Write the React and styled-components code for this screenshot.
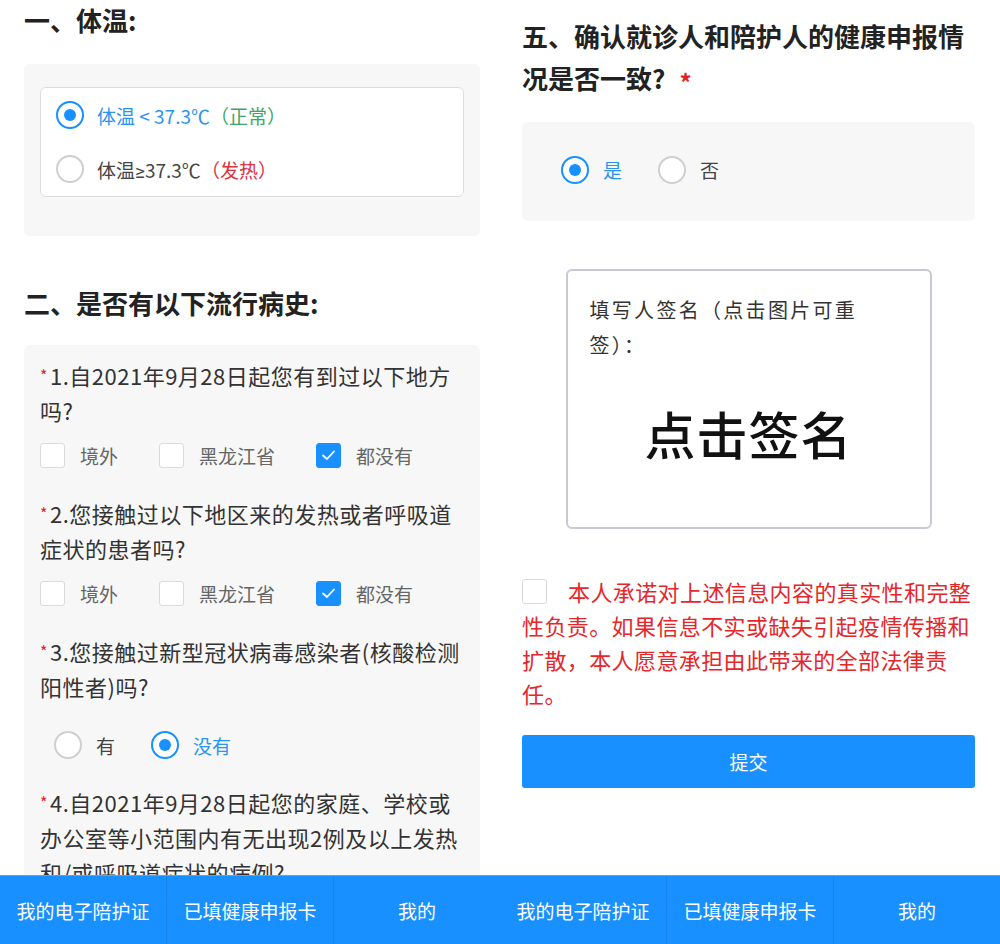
import React from "react";
import styled, { createGlobalStyle } from "styled-components";

const BLUE = "#1890ff";

const GlobalStyle = createGlobalStyle`
  html, body {
    margin: 0;
    padding: 0;
    background: #fff;
  }
  body {
    font-family: "Noto Sans CJK SC", "Noto Sans", sans-serif;
    color: #333;
  }
  * {
    box-sizing: border-box;
  }
`;

const Screen = styled.div`
  display: flex;
  width: 1000px;
  height: 944px;
  overflow: hidden;
`;

const Phone = styled.div`
  width: 500px;
  display: flex;
  flex-direction: column;
`;

const Content = styled.div`
  flex: 1;
  overflow: hidden;
  padding: ${(p) => p.$pad};
`;

const Heading = styled.h2`
  margin: ${(p) => p.$margin || 0};
  font-size: 26px;
  font-weight: 700;
  line-height: ${(p) => p.$lh || 40}px;
  color: #222;
`;

const Star = styled.span`
  display: inline-block;
  margin: 0 ${(p) => p.$gap ?? 2}px 0 ${(p) => p.$before || 0}px;
  color: #e52222;
  font-size: ${(p) => p.$size || 16}px;
  line-height: 1;
  vertical-align: ${(p) => p.$lift ?? 3}px;
`;

const Card = styled.div`
  background: #f7f7f7;
  border-radius: 6px;
  padding: ${(p) => p.$pad};
`;

const TempBox = styled.div`
  background: #fff;
  border: 1.5px solid #dcdcdc;
  border-radius: 6px;
`;

const OptionRow = styled.div`
  height: 54px;
  display: flex;
  align-items: center;
  gap: 13px;
  padding-left: 15px;
`;

const RadioCircle = styled.span`
  width: 28px;
  height: 28px;
  flex-shrink: 0;
  border-radius: 50%;
  border: 2.5px solid ${(p) => (p.$on ? BLUE : "#cfcfcf")};
  background: #fff;
  display: inline-flex;
  align-items: center;
  justify-content: center;
  &::after {
    content: "";
    display: ${(p) => (p.$on ? "block" : "none")};
    width: 12px;
    height: 12px;
    border-radius: 50%;
    background: ${BLUE};
  }
`;

const OptionText = styled.span`
  font-size: 19px;
  color: ${(p) => (p.$on ? "#2a93f0" : "#444")};
`;

const Tag = styled.span`
  color: ${(p) => p.$color};
`;

const Sign = styled.span`
  font-family: Roboto, "Noto Sans", sans-serif;
`;

const Question = styled.p`
  margin: 0;
  font-size: 22px;
  line-height: 35px;
  letter-spacing: 0.5px;
  color: #333;
`;

const CheckRow = styled.div`
  height: 34px;
  margin: 10px 0 24px;
  display: flex;
  align-items: center;
  gap: 41px;
`;

const CheckItem = styled.label`
  display: flex;
  align-items: center;
  gap: 15px;
  font-size: 19px;
  color: #666;
`;

const Box = styled.span`
  width: 25px;
  height: 25px;
  flex-shrink: 0;
  border-radius: 3px;
  border: 1.5px solid ${(p) => (p.$on ? BLUE : "#dadada")};
  background: ${(p) => (p.$on ? BLUE : "#fff")};
  display: inline-flex;
  align-items: center;
  justify-content: center;
`;

const RadioRow = styled.div`
  height: 40px;
  margin: ${(p) => p.$margin || 0};
  padding-left: ${(p) => p.$indent || 0}px;
  display: flex;
  align-items: center;
  gap: 36px;
`;

const RadioItem = styled.label`
  display: flex;
  align-items: center;
  gap: 14px;
`;

const ConfirmCard = styled(Card)`
  height: 99px;
  display: flex;
  align-items: center;
`;

const SignBox = styled.div`
  width: 366px;
  height: 260px;
  margin: 48px auto 0;
  padding: 21px 22px 0;
  background: #fff;
  border: 2px solid #c8c8d6;
  border-radius: 6px;
`;

const SignHint = styled.div`
  width: 284px;
  font-size: 20px;
  letter-spacing: 2.3px;
  line-height: 35px;
  color: #333;
`;

const SignBig = styled.div`
  margin-top: 36px;
  line-height: 70px;
  text-align: center;
  font-size: 51px;
  font-weight: 500;
  letter-spacing: 1px;
  color: #111;
`;

const Promise = styled.p`
  margin: 45px 0 0;
  font-size: 22px;
  line-height: 34px;
  letter-spacing: 0.4px;
  color: #e5262b;
`;

const InlineBox = styled(Box)`
  display: inline-block;
  vertical-align: -3px;
  margin-right: 21px;
`;

const SubmitButton = styled.button`
  display: block;
  width: 100%;
  height: 53px;
  margin-top: 25px;
  border: none;
  border-radius: 3px;
  background: ${BLUE};
  color: #fff;
  font-family: inherit;
  font-size: 19px;
`;

const TabBar = styled.nav`
  height: 69px;
  flex-shrink: 0;
  display: flex;
  background: ${BLUE};
  border-top: 1px solid #4aa8ff;
`;

const Tab = styled.div`
  flex: 1;
  display: flex;
  align-items: center;
  justify-content: center;
  font-size: 19px;
  color: #fff;
  & + & {
    border-left: 1px solid rgba(0, 0, 0, 0.07);
  }
`;

const Check = () => (
  <svg width="17" height="17" viewBox="0 0 17 17">
    <polyline
      points="3,8.5 7,12 14,4.5"
      fill="none"
      stroke="#fff"
      strokeWidth="1.8"
      strokeLinecap="round"
      strokeLinejoin="round"
    />
  </svg>
);

const Radio = ({ on, label }) => (
  <RadioItem>
    <RadioCircle $on={on} />
    <OptionText $on={on}>{label}</OptionText>
  </RadioItem>
);

const Checks = ({ picked }) => (
  <CheckRow>
    {["境外", "黑龙江省", "都没有"].map((name) => (
      <CheckItem key={name}>
        <Box $on={name === picked}>{name === picked && <Check />}</Box>
        {name}
      </CheckItem>
    ))}
  </CheckRow>
);

const Tabs = () => (
  <TabBar>
    <Tab>我的电子陪护证</Tab>
    <Tab>已填健康申报卡</Tab>
    <Tab>我的</Tab>
  </TabBar>
);

const LeftScreen = () => (
  <Phone>
    <Content $pad="0 20px 0 24px">
      <Heading $margin="0 0 24px">一、体温:</Heading>
      <Card $pad="23px 16px 39px">
        <TempBox>
          <OptionRow>
            <RadioCircle $on />
            <OptionText $on>
              体温 &lt; 37.3℃<Tag $color="#3aa66c">（正常）</Tag>
            </OptionText>
          </OptionRow>
          <OptionRow>
            <RadioCircle />
            <OptionText>
              体温<Sign>≥</Sign>37.3℃<Tag $color="#e0303a">（发热）</Tag>
            </OptionText>
          </OptionRow>
        </TempBox>
      </Card>

      <Heading $margin="47px 0 22px">二、是否有以下流行病史:</Heading>
      <Card $pad="13px 14px 0 16px">
        <Question>
          <Star>*</Star>1.自2021年9月28日起您有到过以下地方吗?
        </Question>
        <Checks picked="都没有" />
        <Question>
          <Star>*</Star>2.您接触过以下地区来的发热或者呼吸道症状的患者吗?
        </Question>
        <Checks picked="都没有" />
        <Question>
          <Star>*</Star>3.您接触过新型冠状病毒感染者(核酸检测阳性者)吗?
        </Question>
        <RadioRow $indent={14} $margin="21px 0 20px">
          <Radio label="有" />
          <Radio on label="没有" />
        </RadioRow>
        <Question>
          <Star>*</Star>4.自2021年9月28日起您的家庭、学校或办公室等小范围内有无出现2例及以上发热和/或呼吸道症状的病例?
        </Question>
      </Card>
    </Content>
    <Tabs />
  </Phone>
);

const RightScreen = () => (
  <Phone>
    <Content $pad="15px 25px 0 22px">
      <Heading $lh={42} $margin="0 0 23px">
        五、确认就诊人和陪护人的健康申报情况是否一致?
        <Star $size={24} $lift={-3} $before={14} $gap={0}>
          *
        </Star>
      </Heading>
      <ConfirmCard $pad="0 0 0 39px">
        <RadioRow $margin="0 0 4px">
          <Radio on label="是" />
          <Radio label="否" />
        </RadioRow>
      </ConfirmCard>

      <SignBox>
        <SignHint>填写人签名（点击图片可重签）：</SignHint>
        <SignBig>点击签名</SignBig>
      </SignBox>

      <Promise>
        <InlineBox />
        本人承诺对上述信息内容的真实性和完整性负责。如果信息不实或缺失引起疫情传播和扩散，本人愿意承担由此带来的全部法律责任。
      </Promise>
      <SubmitButton>提交</SubmitButton>
    </Content>
    <Tabs />
  </Phone>
);

const App = () => (
  <>
    <GlobalStyle />
    <Screen>
      <LeftScreen />
      <RightScreen />
    </Screen>
  </>
);

export default App;
